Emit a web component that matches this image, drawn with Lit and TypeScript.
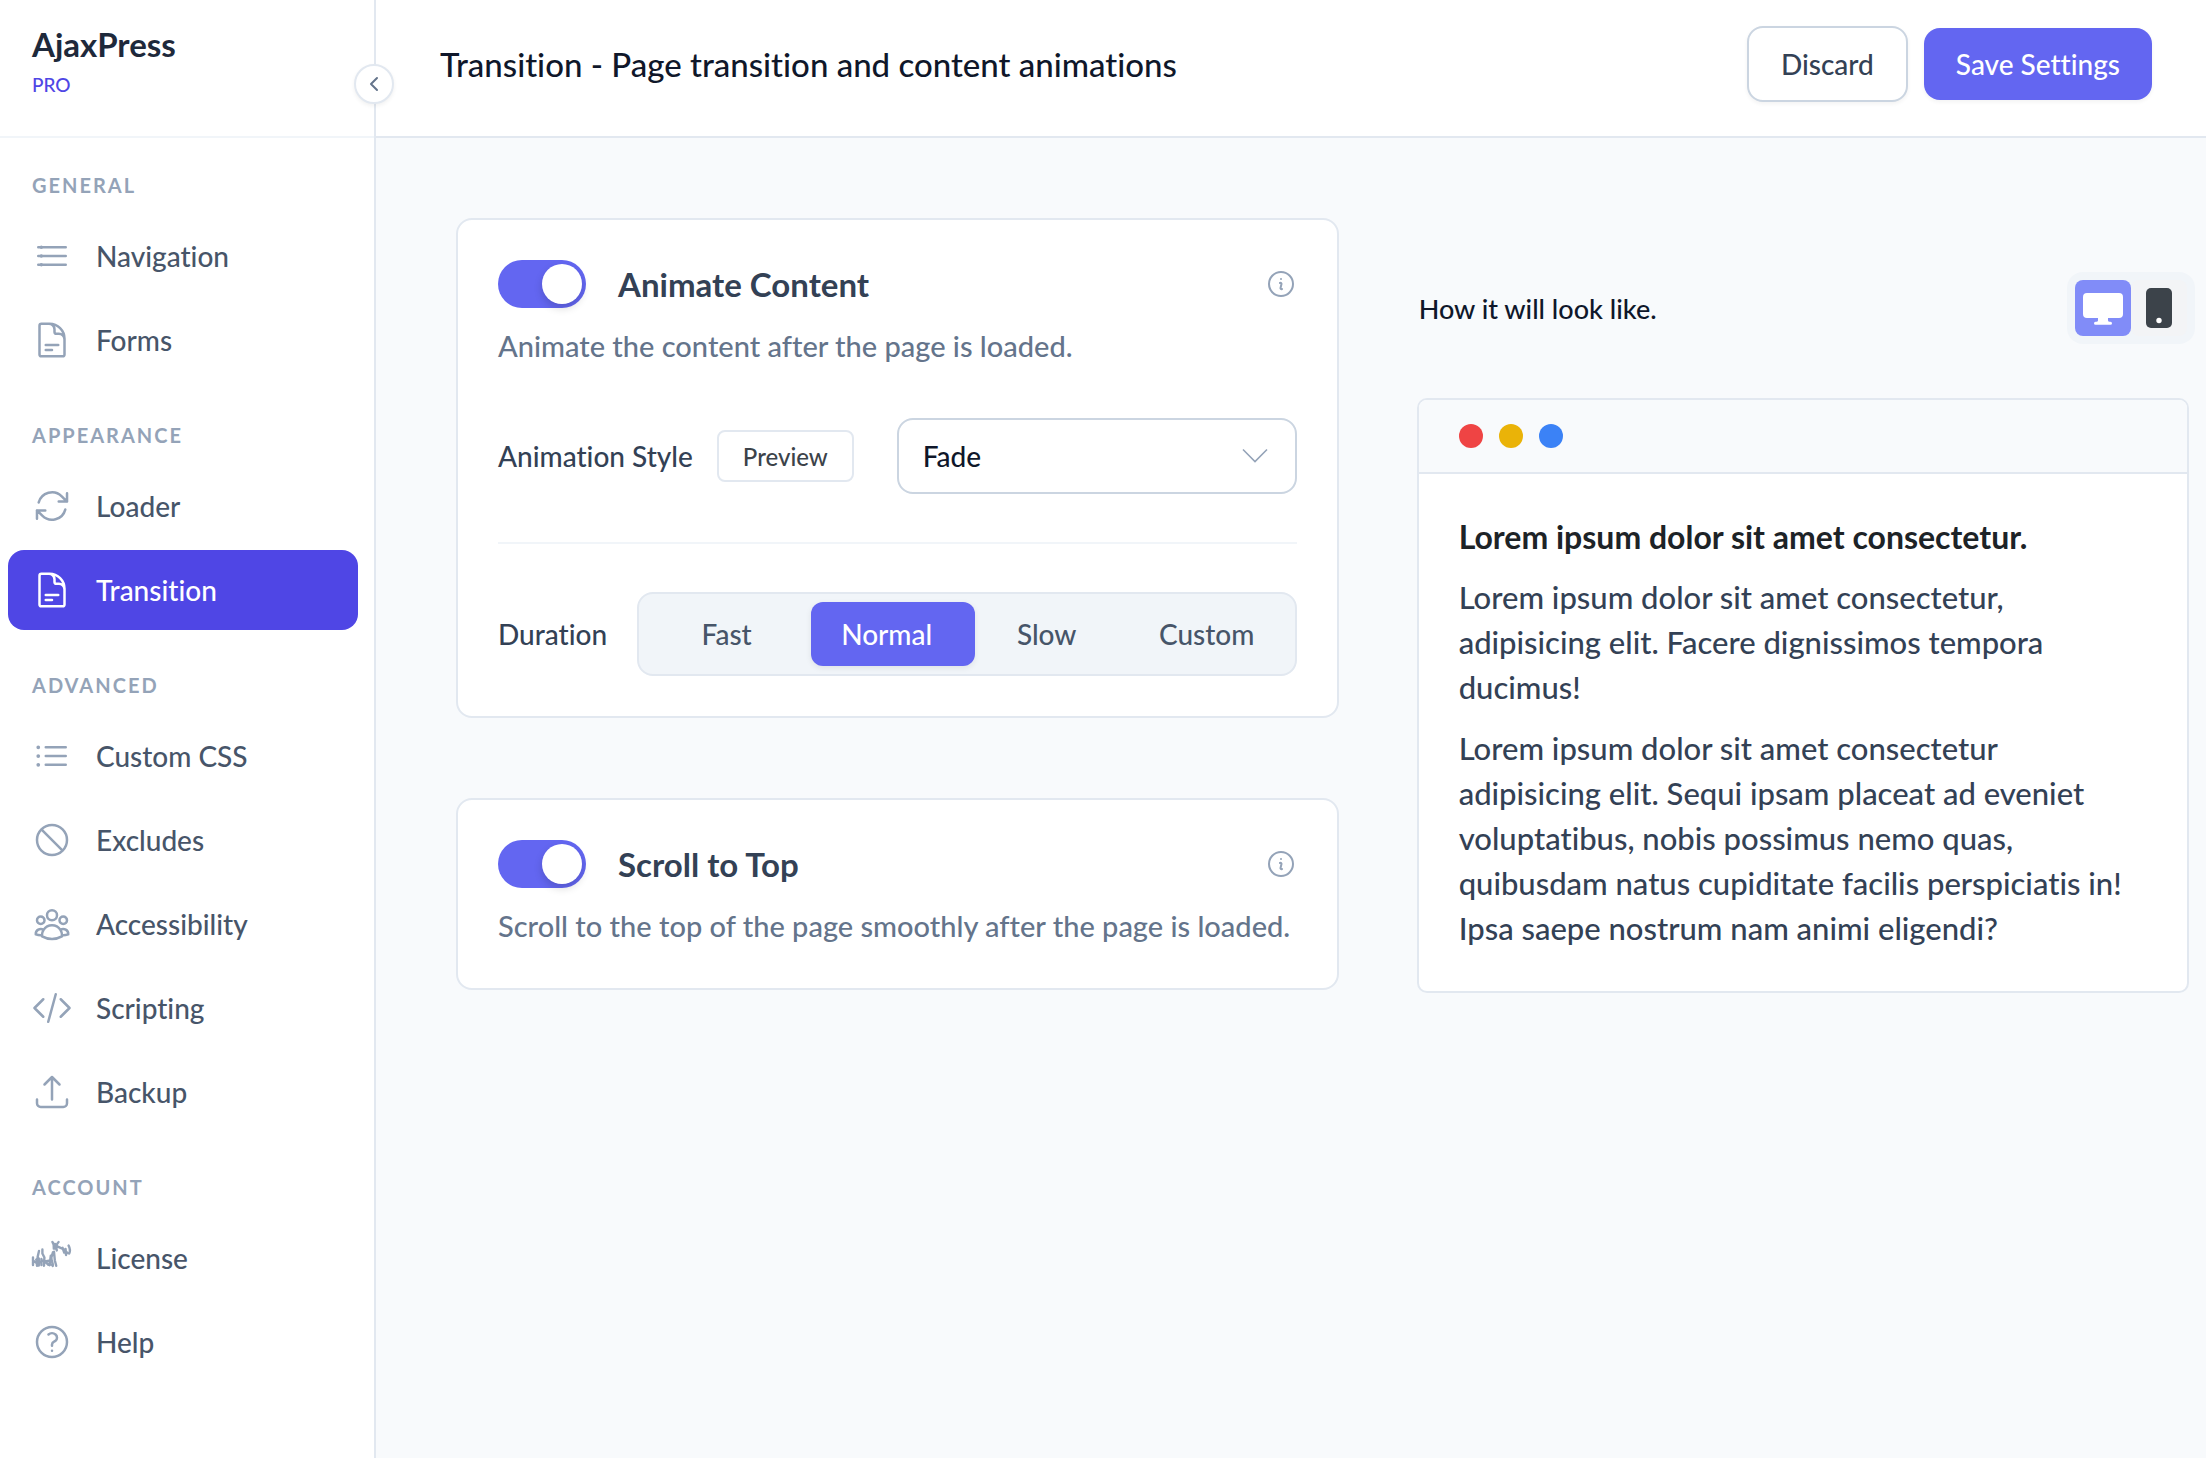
import { LitElement, html, svg, css } from "lit";
import { customElement, property, state } from "lit/decorators.js";
import { classMap } from "lit/directives/class-map.js";

interface NavItem {
  label: string;
  icon: string;
}

interface NavGroup {
  title: string;
  items: NavItem[];
}

const icons: Record<string, unknown> = {
  bars: svg`<path d="M3.75 6.75h16.5M3.75 12h16.5M3.75 17.25h16.5"/>
    <g fill="currentColor" stroke="none"><circle cx="5.6" cy="6.75" r="1"/><circle cx="5.6" cy="12" r="1"/><circle cx="5.6" cy="17.25" r="1"/></g>`,
  document: svg`<path d="M19.5 14.25v-2.625a3.375 3.375 0 0 0-3.375-3.375h-1.5A1.125 1.125 0 0 1 13.5 7.125v-1.5a3.375 3.375 0 0 0-3.375-3.375H8.25m0 12.75h7.5m-7.5 3H12M10.5 2.25H5.625c-.621 0-1.125.504-1.125 1.125v17.25c0 .621.504 1.125 1.125 1.125h12.75c.621 0 1.125-.504 1.125-1.125V11.25a9 9 0 0 0-9-9Z"/>`,
  refresh: svg`<path d="M16.023 9.348h4.992v-.001M2.985 19.644v-4.992m0 0h4.992m-4.993 0 3.181 3.183a8.25 8.25 0 0 0 13.803-3.7M4.031 9.865a8.25 8.25 0 0 1 13.803-3.7l3.181 3.182m0-4.991v4.99"/>`,
  list: svg`<path d="M8.25 6.75h12M8.25 12h12m-12 5.25h12M3.75 6.75h.007v.008H3.75V6.75Zm.375 0a.375.375 0 1 1-.75 0 .375.375 0 0 1 .75 0ZM3.75 12h.007v.008H3.75V12Zm.375 0a.375.375 0 1 1-.75 0 .375.375 0 0 1 .75 0Zm-.375 5.25h.007v.008H3.75v-.008Zm.375 0a.375.375 0 1 1-.75 0 .375.375 0 0 1 .75 0Z"/>`,
  forbid: svg`<path d="M18.364 18.364A9 9 0 0 0 5.636 5.636m12.728 12.728A9 9 0 0 1 5.636 5.636m12.728 12.728L5.636 5.636"/>`,
  people: svg`<path d="M18 18.72a9.094 9.094 0 0 0 3.741-.479 3 3 0 0 0-4.682-2.72m.94 3.198.001.031c0 .225-.012.447-.037.666A11.944 11.944 0 0 1 12 21c-2.17 0-4.207-.576-5.963-1.584A6.062 6.062 0 0 1 6 18.719m12 0a5.971 5.971 0 0 0-.941-3.197m0 0A5.995 5.995 0 0 0 12 12.75a5.995 5.995 0 0 0-5.058 2.772m0 0a3 3 0 0 0-4.681 2.72 8.986 8.986 0 0 0 3.74.477m.94-3.197a5.971 5.971 0 0 0-.94 3.197M15 6.75a3 3 0 1 1-6 0 3 3 0 0 1 6 0Zm6 3a2.25 2.25 0 1 1-4.5 0 2.25 2.25 0 0 1 4.5 0Zm-13.5 0a2.25 2.25 0 1 1-4.5 0 2.25 2.25 0 0 1 4.5 0Z"/>`,
  code: svg`<path d="M17.25 6.75 22.5 12l-5.25 5.25m-10.5 0L1.5 12l5.25-5.25m7.5-3-4.5 16.5"/>`,
  upload: svg`<path d="M3 16.5v2.25A2.25 2.25 0 0 0 5.25 21h13.5A2.25 2.25 0 0 0 21 18.75V16.5m-13.5-9L12 3m0 0 4.5 4.5M12 3v13.5"/>`,
  scribble: svg`<g transform="scale(.6)" stroke-width="2.4"><path d="M1 19.500v7.500M1 22.600l2.800 1.800M5 27.800c-.7-3-.6-5.600.4-7.800l1.600-7M4.200 21.600l3.600 2.600 2.600-1.600 3.800 2 2.200 2.200M6.800 20.500v7M10.400 11.500v4l2 4-.4 8.200M9.400 21v6M12.600 23.400l4.400-.6M20.800 28c.2-4.200-1.600-5-1.400-8.600l1.600-5.200M18.800 17.600l-1.200 9.600M22 13.800l.8 8.400 1.400 5.600M17 25.800l3 1M20.400 4c1.600 2 1.800 3.800 1.400 6.600M23 6v4.500M26.600 4c-2.400 2.400-2.800 5-1.800 8.400M25.800 8.600l5.600 2.600M30.600 9.800l1.600 4.800M33.600 11l.4 6M36.600 7.600c1.600 3 1.800 5.400.6 8M33 12.400l2.400 2.600"/></g>`,
  help: svg`<path d="M9.879 7.519c1.171-1.025 3.071-1.025 4.242 0 1.172 1.025 1.172 2.687 0 3.712-.203.179-.43.326-.67.442-.745.361-1.45.999-1.45 1.827v.75M21 12a9 9 0 1 1-18 0 9 9 0 0 1 18 0Zm-9 5.25h.008v.008H12v-.008Z"/>`,
  info: svg`<path d="m11.25 11.25.041-.02a.75.75 0 0 1 1.063.852l-.708 2.836a.75.75 0 0 0 1.063.853l.041-.021M21 12a9 9 0 1 1-18 0 9 9 0 0 1 18 0Zm-9-3.75h.008v.008H12V8.25Z"/>`,
};

const groups: NavGroup[] = [
  {
    title: "General",
    items: [
      { label: "Navigation", icon: "bars" },
      { label: "Forms", icon: "document" },
    ],
  },
  {
    title: "Appearance",
    items: [
      { label: "Loader", icon: "refresh" },
      { label: "Transition", icon: "document" },
    ],
  },
  {
    title: "Advanced",
    items: [
      { label: "Custom CSS", icon: "list" },
      { label: "Excludes", icon: "forbid" },
      { label: "Accessibility", icon: "people" },
      { label: "Scripting", icon: "code" },
      { label: "Backup", icon: "upload" },
    ],
  },
  {
    title: "Account",
    items: [
      { label: "License", icon: "scribble" },
      { label: "Help", icon: "help" },
    ],
  },
];

const base = css`
  *,
  *::before,
  *::after {
    box-sizing: border-box;
  }
  h1,
  h2,
  h3,
  p,
  ul {
    margin: 0;
    padding: 0;
  }
  ul {
    list-style: none;
  }
  button,
  select,
  input {
    font: inherit;
    font-variant-ligatures: inherit;
    margin: 0;
    cursor: pointer;
  }
  svg {
    display: block;
    flex: none;
  }
`;

@customElement("ap-icon")
class ApIcon extends LitElement {
  @property() name = "";

  static styles = css`
    :host {
      display: block;
      flex: none;
      width: 40px;
      height: 40px;
    }
    .icon {
      display: block;
      width: 100%;
      height: 100%;
      overflow: visible;
      fill: none;
      stroke: currentColor;
      stroke-width: 1.5;
      stroke-linecap: round;
      stroke-linejoin: round;
    }
  `;

  render() {
    return html`<svg class="icon" viewBox="0 0 24 24" aria-hidden="true">${icons[this.name]}</svg>`;
  }
}

@customElement("ap-sidebar")
class ApSidebar extends LitElement {
  @property() active = "";

  static styles = [
    base,
    css`
      :host {
        display: block;
        position: relative;
        background: #fff;
        border-right: 2px solid #e2e8f0;
      }
      .head {
        padding: 23px 32px 31px;
        border-bottom: 2px solid #f1f5f9;
      }
      .brand {
        font-size: 33px;
        line-height: 42px;
        font-weight: 700;
        color: #1e293b;
      }
      .plan {
        font-size: 19px;
        line-height: 40px;
        color: #4f46e5;
      }
      .collapse {
        position: absolute;
        top: 64px;
        right: -20px;
        width: 40px;
        height: 40px;
        padding: 0;
        display: grid;
        place-items: center;
        color: #64748b;
        background: #fff;
        border: 2px solid #e2e8f0;
        border-radius: 50%;
        box-shadow: 0 2px 4px rgba(0, 0, 0, 0.06);
      }
      .chevron {
        fill: none;
        stroke: currentColor;
        stroke-width: 2;
        stroke-linecap: round;
        stroke-linejoin: round;
      }
      .menu {
        display: flex;
        flex-direction: column;
        gap: 40px;
        padding: 32px 16px 32px 8px;
      }
      .title {
        padding-left: 24px;
        margin-bottom: 16px;
        font-size: 20px;
        line-height: 30px;
        font-weight: 700;
        letter-spacing: 2px;
        text-transform: uppercase;
        color: #94a3b8;
      }
      .items {
        display: flex;
        flex-direction: column;
        gap: 4px;
      }
      .link {
        display: flex;
        align-items: center;
        gap: 24px;
        height: 80px;
        padding: 0 24px;
        border-radius: 16px;
        font-size: 28px;
        color: #475569;
        text-decoration: none;
      }
      .glyph {
        color: #94a3b8;
      }
      .active {
        background: #4f46e5;
        color: #fff;
      }
      .active .glyph {
        color: #fff;
      }
    `,
  ];

  render() {
    return html`
      <div class="head">
        <div class="brand">AjaxPress</div>
        <div class="plan">PRO</div>
      </div>
      <button class="collapse" type="button" aria-label="Collapse sidebar">
        <svg class="chevron" width="14" height="20" viewBox="0 0 14 20" aria-hidden="true">
          <path d="M10 4 4 10l6 6" />
        </svg>
      </button>
      <nav class="menu" aria-label="Settings">
        ${groups.map(
          (group) => html`
            <section>
              <h2 class="title">${group.title}</h2>
              <ul class="items">
                ${group.items.map(
                  (item) => html`
                    <li>
                      <a
                        href="#${item.label.toLowerCase().replace(" ", "-")}"
                        class=${classMap({ link: true, active: item.label === this.active })}
                      >
                        <ap-icon class="glyph" name=${item.icon}></ap-icon>${item.label}
                      </a>
                    </li>
                  `,
                )}
              </ul>
            </section>
          `,
        )}
      </nav>
    `;
  }
}

@customElement("ap-card")
class ApCard extends LitElement {
  @property() heading = "";
  @property() description = "";

  static styles = [
    base,
    css`
      :host {
        display: block;
        padding: 40px;
        background: #fff;
        border: 2px solid #e2e8f0;
        border-radius: 16px;
      }
      .row {
        display: flex;
        align-items: center;
        justify-content: space-between;
      }
      .switch {
        display: flex;
        align-items: center;
        gap: 32px;
        font-size: 33px;
        line-height: 48px;
        font-weight: 700;
        color: #334155;
      }
      .toggle {
        appearance: none;
        width: 88px;
        height: 48px;
        padding: 4px;
        display: flex;
        border-radius: 24px;
        background: #cbd5e1;
      }
      .toggle::before {
        content: "";
        width: 40px;
        height: 40px;
        border-radius: 50%;
        background: #fff;
        box-shadow: 0 4px 8px rgba(0, 0, 0, 0.16);
      }
      .toggle:checked {
        justify-content: flex-end;
        background: #6366f1;
      }
      .info {
        padding: 0;
        border: 0;
        background: none;
        color: #94a3b8;
      }
      .info-icon {
        width: 32px;
        height: 32px;
      }
      .text {
        margin-top: 16px;
        font-size: 29px;
        line-height: 44px;
        color: #64748b;
      }
    `,
  ];

  render() {
    return html`
      <div class="row">
        <label class="switch">
          <input class="toggle" type="checkbox" role="switch" checked />
          ${this.heading}
        </label>
        <button class="info" type="button" aria-label="More information">
          <ap-icon class="info-icon" name="info"></ap-icon>
        </button>
      </div>
      <p class="text">${this.description}</p>
      <slot></slot>
    `;
  }
}

@customElement("ap-preview")
class ApPreview extends LitElement {
  static styles = [
    base,
    css`
      :host {
        display: flex;
        flex-direction: column;
        gap: 54px;
        padding-top: 54px;
      }
      .bar {
        display: flex;
        align-items: center;
        justify-content: space-between;
        margin-right: -6px;
      }
      .caption {
        padding-left: 2px;
        font-size: 27px;
        color: #0f172a;
      }
      .devices {
        display: flex;
        padding: 8px;
        border-radius: 16px;
        background: #f1f5f9;
      }
      .device {
        width: 56px;
        height: 56px;
        padding: 0;
        display: grid;
        place-items: center;
        border: 0;
        border-radius: 8px;
        background: #f3f4f6;
        color: #3c434a;
      }
      .selected {
        background: #818cf8;
        color: #fff;
      }
      .window {
        background: #fff;
        border: 2px solid #e2e8f0;
        border-radius: 10px;
        overflow: hidden;
      }
      .chrome {
        display: flex;
        align-items: center;
        gap: 16px;
        height: 74px;
        padding: 0 40px;
        background: #f8fafc;
        border-bottom: 2px solid #e2e8f0;
      }
      .dot {
        width: 24px;
        height: 24px;
        border-radius: 50%;
      }
      .red {
        background: #ef4444;
      }
      .yellow {
        background: #eab308;
      }
      .blue {
        background: #3b82f6;
      }
      .body {
        display: flex;
        flex-direction: column;
        gap: 16px;
        padding: 40px 48px 40px 40px;
        font-size: 31px;
        line-height: 45px;
        color: #334155;
      }
      .lead {
        font-size: 32px;
        line-height: 45px;
        color: #1d2327;
      }
    `,
  ];

  render() {
    return html`
      <div class="bar">
        <p class="caption">How it will look like.</p>
        <div class="devices">
          <button class="device selected" type="button" aria-label="Desktop" aria-pressed="true">
            <svg width="40" height="40" viewBox="0 0 40 40" fill="currentColor" aria-hidden="true">
              <path d="M4 5h32a4 4 0 0 1 4 4v17a4 4 0 0 1-4 4H25v2.5a1.5 1.5 0 0 0 1.5 1.2h1a1.5 1.5 0 0 1 0 3h-15a1.5 1.5 0 0 1 0-3h1a1.5 1.5 0 0 0 1.5-1.2V30H4a4 4 0 0 1-4-4V9a4 4 0 0 1 4-4Z" />
            </svg>
          </button>
          <button class="device" type="button" aria-label="Mobile" aria-pressed="false">
            <svg width="26" height="40" viewBox="0 0 26 40" fill="currentColor" aria-hidden="true">
              <rect width="26" height="40" rx="5" />
              <circle cx="13" cy="32.5" r="2.7" fill="#fff" />
            </svg>
          </button>
        </div>
      </div>
      <article class="window">
        <div class="chrome">
          <span class="dot red"></span>
          <span class="dot yellow"></span>
          <span class="dot blue"></span>
        </div>
        <div class="body">
          <h3 class="lead">Lorem ipsum dolor sit amet consectetur.</h3>
          <p>Lorem ipsum dolor sit amet consectetur, adipisicing elit. Facere dignissimos tempora ducimus!</p>
          <p>
            Lorem ipsum dolor sit amet consectetur adipisicing elit. Sequi ipsam placeat ad eveniet
            voluptatibus, nobis possimus nemo quas, quibusdam natus cupiditate facilis perspiciatis in! Ipsa
            saepe nostrum nam animi eligendi?
          </p>
        </div>
      </article>
    `;
  }
}

@customElement("app-root")
class AppRoot extends LitElement {
  @state() private duration = "Normal";

  static styles = [
    base,
    css`
      :host {
        display: grid;
        grid-template-columns: 376px minmax(0, 1fr);
        min-height: 100vh;
        background: #f8fafc;
        font-family: "Trebuchet MS", Lato, "Open Sans", sans-serif;
        font-weight: 500;
        font-variant-ligatures: none;
      }
      .sidebar {
        z-index: 1;
      }
      .top {
        display: flex;
        align-items: center;
        justify-content: space-between;
        padding: 26px 54px 34px 64px;
        background: #fff;
        border-bottom: 2px solid #e2e8f0;
      }
      .heading {
        font-size: 33px;
        line-height: 40px;
        font-weight: 500;
        color: #0f172a;
      }
      .actions {
        display: flex;
        align-items: center;
        gap: 16px;
        font-size: 28px;
      }
      .action {
        padding: 0 32px;
        line-height: 72px;
        border-radius: 16px;
        box-shadow: 0 2px 4px rgba(0, 0, 0, 0.05);
      }
      .discard {
        color: #334155;
        background: #fff;
        border: 2px solid #cbd5e1;
      }
      .save {
        color: #fff;
        background: #6366f1;
        border: 0;
      }
      .content {
        display: grid;
        grid-template-columns: minmax(0, 8fr) minmax(0, 7fr);
        align-items: start;
        gap: 78px;
        padding: 80px 17px 80px 80px;
      }
      .cards {
        display: flex;
        flex-direction: column;
        gap: 80px;
      }
      .field {
        display: flex;
        align-items: center;
        font-size: 28px;
        color: #334155;
      }
      .style-field {
        gap: 24px;
        margin-top: 50px;
        padding-bottom: 48px;
        border-bottom: 2px solid #f1f5f9;
      }
      .duration-field {
        justify-content: space-between;
        gap: 24px;
        margin-top: 48px;
      }
      .preview {
        height: 52px;
        padding: 0 24px;
        font-size: 24px;
        color: #3c434a;
        background: #fff;
        border: 2px solid #e2e8f0;
        border-radius: 8px;
      }
      .picker {
        display: grid;
        flex: 0 1 400px;
        align-items: center;
        margin-left: auto;
      }
      .select {
        grid-area: 1 / 1;
        appearance: none;
        width: 100%;
        height: 76px;
        padding: 0 24px;
        color: #0f172a;
        background: #fff;
        border: 2px solid #cbd5e1;
        border-radius: 16px;
      }
      .arrow {
        grid-area: 1 / 1;
        justify-self: end;
        margin-right: 29px;
        pointer-events: none;
        fill: none;
        stroke: #94a3b8;
        stroke-width: 1.6;
      }
      .segments {
        display: grid;
        flex: 0 1 660px;
        grid-template-columns: repeat(4, minmax(0, 1fr));
        padding: 8px;
        background: #f1f5f9;
        border: 2px solid #e2e8f0;
        border-radius: 16px;
      }
      .segment {
        position: relative;
        line-height: 64px;
        text-align: center;
        color: #475569;
        cursor: pointer;
      }
      .radio {
        position: absolute;
        inset: 0 -8px 0 4px;
        z-index: 0;
        appearance: none;
        border-radius: 12px;
      }
      .radio:checked {
        background: #6366f1;
        box-shadow: 0 2px 6px rgba(0, 0, 0, 0.08);
      }
      .name {
        position: relative;
      }
      .chosen {
        color: #fff;
      }
    `,
  ];

  render() {
    return html`
      <ap-sidebar class="sidebar" active="Transition"></ap-sidebar>
      <main>
        <header class="top">
          <h1 class="heading">Transition - Page transition and content animations</h1>
          <div class="actions">
            <button class="action discard" type="button">Discard</button>
            <button class="action save" type="button">Save Settings</button>
          </div>
        </header>
        <div class="content">
          <div class="cards">
            <ap-card heading="Animate Content" description="Animate the content after the page is loaded.">
              <div class="field style-field">
                <label for="style">Animation Style</label>
                <button class="preview" type="button">Preview</button>
                <div class="picker">
                  <select class="select" id="style">
                    <option>Fade</option>
                  </select>
                  <svg class="arrow" width="26" height="16" viewBox="0 0 26 16" aria-hidden="true">
                    <path d="M1 1.5l12 12 12-12" />
                  </svg>
                </div>
              </div>
              <div class="field duration-field">
                <span id="duration">Duration</span>
                <div class="segments" role="radiogroup" aria-labelledby="duration">
                  ${["Fast", "Normal", "Slow", "Custom"].map(
                    (name) => html`
                      <label class=${classMap({ segment: true, chosen: name === this.duration })}>
                        <input
                          class="radio"
                          type="radio"
                          name="duration"
                          .checked=${name === this.duration}
                          @change=${() => (this.duration = name)}
                        />
                        <span class="name">${name}</span>
                      </label>
                    `,
                  )}
                </div>
              </div>
            </ap-card>
            <ap-card
              heading="Scroll to Top"
              description="Scroll to the top of the page smoothly after the page is loaded."
            ></ap-card>
          </div>
          <ap-preview></ap-preview>
        </div>
      </main>
    `;
  }
}
